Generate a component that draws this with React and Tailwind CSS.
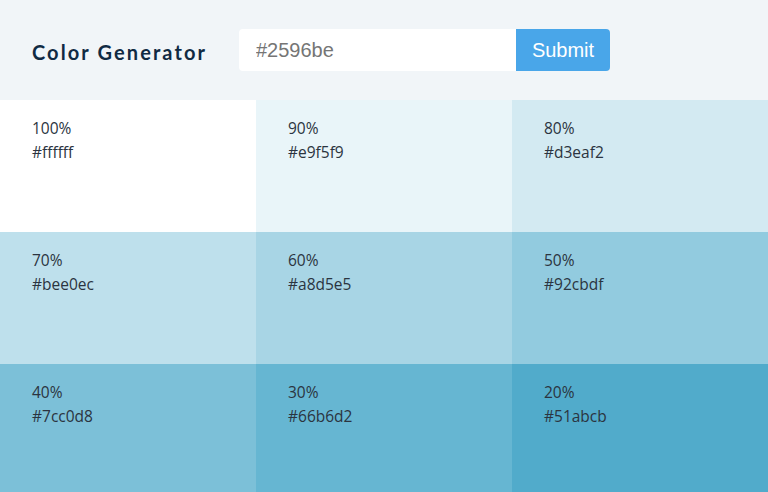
import React from "react";

const colors = [
  ["100%", "#ffffff", "bg-[#ffffff]"],
  ["90%", "#e9f5f9", "bg-[#e9f5f9]"],
  ["80%", "#d3eaf2", "bg-[#d3eaf2]"],
  ["70%", "#bee0ec", "bg-[#bee0ec]"],
  ["60%", "#a8d5e5", "bg-[#a8d5e5]"],
  ["50%", "#92cbdf", "bg-[#92cbdf]"],
  ["40%", "#7cc0d8", "bg-[#7cc0d8]"],
  ["30%", "#66b6d2", "bg-[#66b6d2]"],
  ["20%", "#51abcb", "bg-[#51abcb]"],
];

export default function App() {
  return (
    <div className="w-[768px] h-[492px] overflow-hidden bg-[#f1f5f8] font-['Open_Sans',sans-serif]">
      <header className="h-[100px] flex items-center pl-[32px]">
        <h3 className="mt-[3px] text-[20px] font-bold tracking-[2.1px] text-[#102a43] font-['Lato',sans-serif] w-[207px]">
          Color Generator
        </h3>
        <form className="flex h-[42px]">
          <input
            className="w-[277px] h-[42px] bg-white rounded-l-[4px] pl-[17px] text-[20px] text-[#333] placeholder:text-[#757575] font-['Liberation_Sans',Arial,sans-serif] outline-none"
            placeholder="#2596be"
          />
          <button
            type="button"
            className="w-[94px] h-[42px] bg-[#49a6e9] text-white text-[20px] rounded-r-[4px] font-['Liberation_Sans',Arial,sans-serif]"
          >
            Submit
          </button>
        </form>
      </header>
      <section className="grid grid-cols-3">
        {colors.map(([p, hex, bg]) => (
          <article key={hex} className={`${bg} h-[132px] pl-[32px] pt-[16px] text-[15.5px] leading-[24px] text-[#2b3440] font-['Open_Sans',sans-serif]`}>
            <p>{p}</p>
            <p>{hex}</p>
          </article>
        ))}
      </section>
    </div>
  );
}
